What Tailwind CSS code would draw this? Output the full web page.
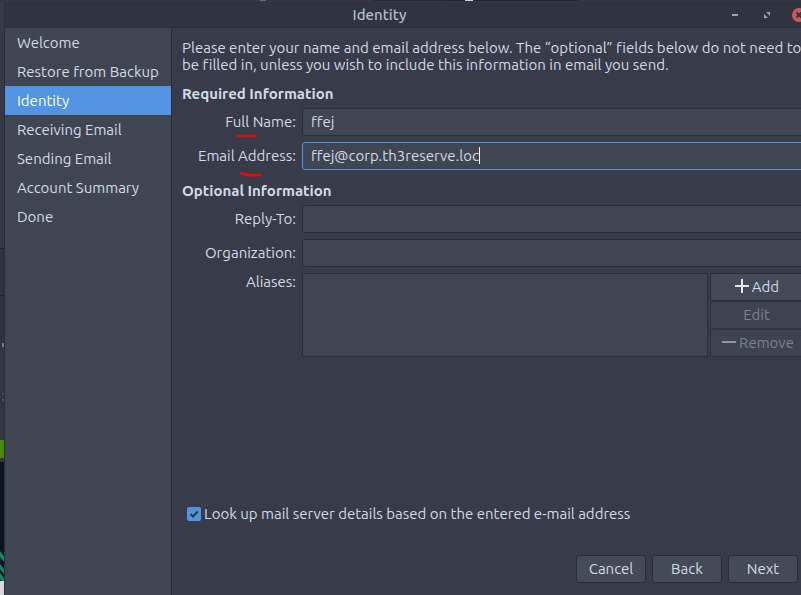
<!DOCTYPE html>
<html lang="en">
<head>
<meta charset="utf-8">
<meta name="viewport" content="width=device-width, initial-scale=1">
<title>Identity</title>
<script src="https://cdn.jsdelivr.net/npm/@tailwindcss/browser@4"></script>
</head>
<body class="flex h-screen flex-col overflow-hidden bg-[#383b4a] font-['Ubuntu','Noto_Sans',sans-serif] text-[15px] leading-[17px] text-[#d3dae3] [font-variant-ligatures:none]">

  <!-- Desktop showing above the window -->
  <div class="flex h-[2px] shrink-0 bg-[#343743]" aria-hidden="true">
    <span class="w-[260px]"></span><span class="h-px w-[6px] bg-[#6b6d75]"></span>
    <span class="w-[108px]"></span><span class="h-px w-[71px] bg-[#252831]"></span>
    <span class="h-px w-[20px] bg-[#29242b]"></span><span class="h-px w-[8px] bg-[#d0d0d0]"></span><span class="h-px w-[106px] bg-[#29242b]"></span>
  </div>

  <div class="flex min-h-0 flex-1">
    <!-- Desktop showing left of the window -->
    <div class="flex w-1 shrink-0 flex-col bg-[#30333e]" aria-hidden="true">
      <span class="h-[247px] border-b border-[#22252e] bg-[#373a46]"></span>
      <span class="h-[47px] border-b border-[#22252e]"></span>
      <span class="h-[47px]"></span>
      <span class="ml-[2px] h-1 bg-[#71808d]"></span>
      <span class="h-[46px] bg-[#33363f]"></span>
      <span class="ml-[2px] h-[2px] bg-[#31518c]"></span>
      <span class="h-1 bg-[#33363f]"></span>
      <span class="ml-[2px] h-[2px] bg-[#31518c]"></span>
      <span class="h-[39px] bg-[#33363f]"></span>
      <span class="h-[18px] bg-[#468a06]"></span>
      <span class="h-1 bg-[#33363f]"></span>
      <span class="h-[89px] bg-[#0b141e]"></span>
      <svg class="h-[30px] w-1 bg-[#0b141e]" viewBox="0 0 4 30"><path d="M0 0L4 5V11L0 6ZM0 13L4 18V23L0 18ZM0 22L4 27V30H2L0 28Z" fill="#0c8a63"/></svg>
      <span class="flex-1 bg-[#d8d8d8]"></span>
    </div>

    <div class="flex min-w-0 flex-1 flex-col border-l border-[#2b2e39]">
      <header class="flex h-[26px] shrink-0 items-center border-b border-[#2b2e39] bg-[#2f343f]">
        <h1 class="flex-1 pl-[26px] text-center font-medium text-[#b4bbc8]">Identity</h1>
        <div class="-mr-[5px] flex gap-[18px]">
          <button type="button" aria-label="Minimize" class="size-[14px]">
            <svg viewBox="0 0 14 14" class="size-[14px]"><path d="M4 6h6v2H4z" fill="#9da3b0"/></svg>
          </button>
          <button type="button" aria-label="Restore" class="size-[14px]">
            <svg viewBox="0 0 14 14" class="size-[14px]"><path d="M6 4h4v4zM4 6v4h4z" fill="#9da3b0"/></svg>
          </button>
          <button type="button" aria-label="Close" class="size-[14px]">
            <svg viewBox="0 0 14 14" class="size-[14px]"><circle cx="7" cy="7" r="7" fill="#cc575d"/><path d="M4.500 4.500l5 5M9.500 4.500l-5 5" stroke="#2f343f" stroke-width="2"/></svg>
          </button>
        </div>
      </header>

      <div class="flex min-h-0 flex-1">
        <nav class="w-[167px] shrink-0 border-r border-[#2b2e39] bg-[#404651]" aria-label="Steps">
          <ul class="whitespace-nowrap">
            <li><a href="#welcome" class="block px-3 py-[6px]">Welcome</a></li>
            <li><a href="#restore" class="block px-3 py-[6px]">Restore from Backup</a></li>
            <li><a href="#identity" aria-current="step" class="block bg-[#5294e2] px-3 py-[6px] text-white">Identity</a></li>
            <li><a href="#receiving" class="block px-3 py-[6px]">Receiving Email</a></li>
            <li><a href="#sending" class="block px-3 py-[6px]">Sending Email</a></li>
            <li><a href="#summary" class="block px-3 py-[6px]">Account Summary</a></li>
            <li><a href="#done" class="block px-3 py-[6px]">Done</a></li>
          </ul>
        </nav>

        <form class="flex min-w-0 flex-1 flex-col pt-[11px] pb-3 pl-[10px]">
          <p class="whitespace-nowrap">Please enter your name and email address below. The “optional” fields below do not need to<br>be filled in, unless you wish to include this information in email you send.</p>

          <h2 class="mt-3 font-bold">Required Information</h2>
          <div class="mt-[6px] -mr-1 grid grid-cols-[114px_1fr] items-center gap-[6px]">
            <label for="name" class="relative pb-[2px] text-right">Full Name:
              <svg class="absolute top-[21px] left-[54px] h-[4px] w-[22px]" viewBox="0 0 22 4" aria-hidden="true"><path d="M2 2H19" stroke="#dc1212" stroke-width="2.500" stroke-linecap="round"/></svg>
            </label>
            <input id="name" type="text" value="ffej" class="h-7 w-full rounded-[3px] border border-[#2b2e39] bg-[#404651] px-2 pb-[2px] outline-none">
            <label for="email" class="relative pb-[2px] text-right whitespace-nowrap">Email Address:
              <svg class="absolute top-[24px] left-[57px] h-[6px] w-[24px]" viewBox="0 0 24 6" aria-hidden="true"><path d="M2 2Q9 5 21 4" fill="none" stroke="#f00808" stroke-width="2.500" stroke-linecap="round"/></svg>
            </label>
            <div class="relative">
              <input id="email" type="text" value="ffej@corp.th3reserve.loc" class="block h-7 w-full rounded-[3px] border border-[#5294e2] bg-[#404651] px-2 pb-[2px] outline-none">
              <span class="absolute top-[5px] left-[177px] h-[17px] w-px bg-white" aria-hidden="true"></span>
            </div>
          </div>

          <h2 class="mt-3 font-bold">Optional Information</h2>
          <div class="mt-[6px] -mr-1 grid grid-cols-[114px_1fr] items-center gap-[6px]">
            <label for="reply" class="pb-[2px] text-right">Reply-To:</label>
            <input id="reply" type="text" class="h-7 w-full rounded-[3px] border border-[#2b2e39] bg-[#404651] px-2 outline-none">
            <label for="org" class="pb-[2px] text-right">Organization:</label>
            <input id="org" type="text" class="h-7 w-full rounded-[3px] border border-[#2b2e39] bg-[#404651] px-2 outline-none">
            <label for="aliases" class="self-start text-right">Aliases:</label>
            <div class="flex gap-[2px]">
              <textarea id="aliases" class="h-[84px] min-w-0 flex-1 resize-none border border-[#2b2e39] bg-[#404651] outline-none"></textarea>
              <div class="flex w-[95px] flex-col">
                <button type="button" class="flex h-7 items-center justify-center gap-[2px] rounded-[3px] border border-[#2b2e39] bg-[#444a58] pr-[2px] pb-[2px]">
                  <svg viewBox="0 0 16 16" class="size-4" aria-hidden="true"><path d="M7 1h2v6h6v2H9v6H7V9H1V7h6z" fill="#e6e6e6"/></svg>Add</button>
                <button type="button" disabled class="h-7 rounded-[3px] border border-[#303340] bg-[#3e4350] pr-[2px] pb-[2px] text-[#7b818d]">Edit</button>
                <button type="button" disabled class="flex h-7 items-center justify-center gap-[2px] rounded-[3px] border border-[#303340] bg-[#3e4350] pb-[2px] text-[#7b818d]">
                  <svg viewBox="0 0 16 16" class="size-4" aria-hidden="true"><path d="M1 7h14v2H1z" fill="#92959d"/></svg>Remove</button>
              </div>
            </div>
          </div>

          <div class="mt-auto flex items-center gap-[3px] pl-[5px]">
            <span class="relative size-[14px]">
              <input id="lookup" type="checkbox" checked class="block size-[14px] appearance-none rounded-[2px] bg-[#5294e2]">
              <svg viewBox="0 0 14 14" class="pointer-events-none absolute inset-0 size-[14px]" aria-hidden="true"><path d="M3.500 7l2.500 2.500L10.800 4.500" fill="none" stroke="#2f343f" stroke-width="2"/></svg>
            </span>
            <label for="lookup">Look up mail server details based on the entered e-mail address</label>
          </div>

          <div class="mt-[33px] flex justify-end gap-[6px] pr-[3px]">
            <button type="button" class="h-7 w-[70px] rounded-[3px] border border-[#2b2e39] bg-[#444a58] pb-[2px]">Cancel</button>
            <button type="button" class="h-7 w-[70px] rounded-[3px] border border-[#2b2e39] bg-[#444a58] pb-[2px]">Back</button>
            <button type="button" class="h-7 w-[70px] rounded-[3px] border border-[#2b2e39] bg-[#444a58] pb-[2px]">Next</button>
          </div>
        </form>
      </div>
    </div>
  </div>
</body>
</html>
